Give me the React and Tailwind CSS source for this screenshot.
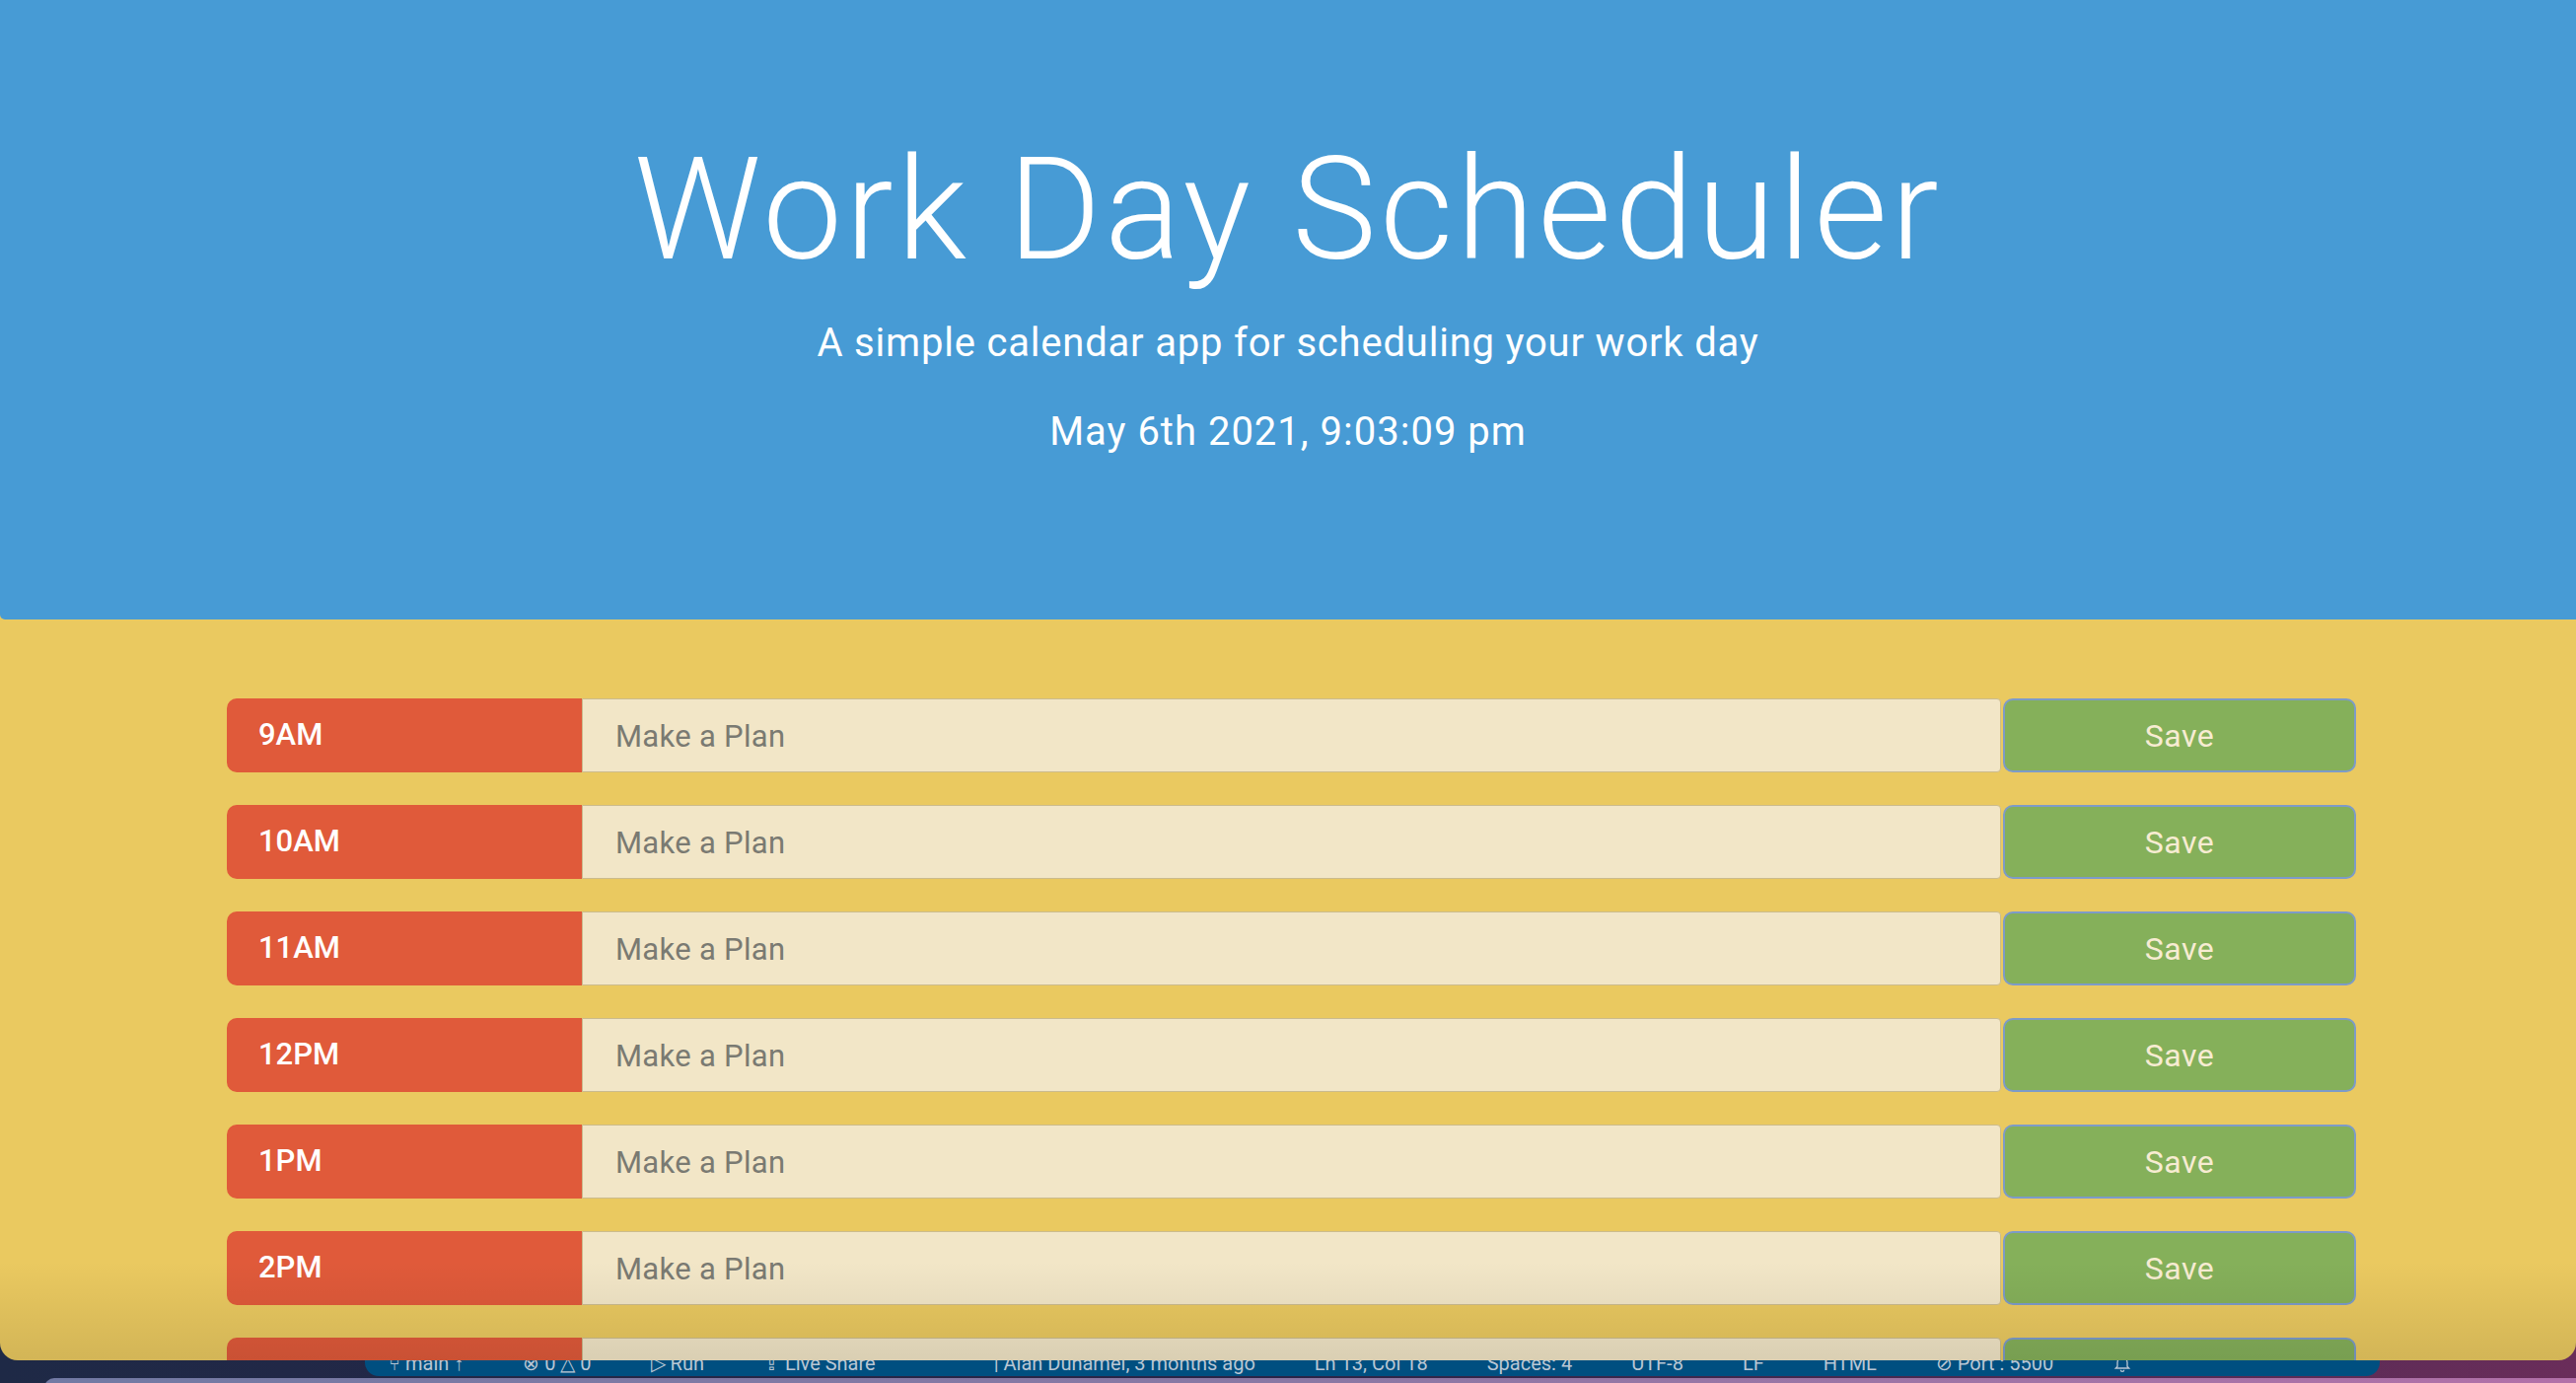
import React from "react";

const hours = ["9AM", "10AM", "11AM", "12PM", "1PM", "2PM", "3PM", "4PM", "5PM"];

function HourRow({ label }) {
  return (
    <div className="flex h-[75px] shrink-0">
      <div className="w-[360px] shrink-0 bg-[#e05a3a] rounded-l-[10px] pl-[32px] flex items-center text-white text-[31px] font-medium">
        {label}
      </div>
      <div className="flex-1 bg-[#f2e6c7] border border-[#cbbb8d] rounded-r-[4px] pl-[33px] pt-[4px] flex items-center text-[31px] tracking-[0.3px] text-[#7a7a72]">
        Make a Plan
      </div>
      <button
        type="button"
        className="w-[358px] ml-[2px] shrink-0 bg-[#85b05a] border-2 border-[#7d9bc8] rounded-[10px] text-[#f7ecd2] text-[32px] tracking-[0.5px]"
      >
        Save
      </button>
    </div>
  );
}

function Bell() {
  return (
    <svg width="20" height="20" viewBox="0 0 24 24" fill="none" stroke="currentColor" strokeWidth="1.6">
      <path d="M6 16V11a6 6 0 0 1 12 0v5l2 2H4z" />
      <path d="M10 20a2 2 0 0 0 4 0" />
    </svg>
  );
}

export default function App() {
  return (
    <div className="w-[2612px] h-[1402px] overflow-hidden bg-linear-to-r from-[#1e2946] via-[#2a2448] to-[#6a2d5a] font-['Roboto','Open_Sans',sans-serif]">
      {/* browser window */}
      <div className="relative z-10 h-[1379px] overflow-hidden rounded-b-[18px] bg-[#eac960]">
        <header className="h-[628px] bg-[#479bd5] rounded-bl-[5px] pt-[127px] text-center text-white">
          <h1 className="text-[144px] font-light leading-[1.2] tracking-[3.5px]">Work Day Scheduler</h1>
          <p className="mt-[18px] text-[40px] leading-[1.5] tracking-[0.8px]">A simple calendar app for scheduling your work day</p>
          <p className="mt-[30px] text-[40px] leading-[1.5] tracking-[1px]">May 6th 2021, 9:03:09 pm</p>
        </header>

        <div className="w-[2159px] ml-[230px] pt-[80px] flex flex-col gap-[33px]">
          {hours.map((h) => (
            <HourRow key={h} label={h} />
          ))}
        </div>

        {/* dock shadow at window bottom */}
        <div className="absolute left-0 right-0 bottom-0 h-[100px] bg-linear-to-b from-transparent to-black/10 pointer-events-none" />
      </div>

      {/* editor status bar peeking out behind */}
      <div className="relative -mt-[14px] ml-[370px] w-[2043px] h-[30px] bg-[#004f80] rounded-b-[14px] flex items-center gap-[60px] pl-[24px] pt-[4px] text-[20px] text-[#b9c6d4] whitespace-nowrap overflow-hidden">
        <span>⑂ main ↑</span>
        <span>⊗ 0 △ 0</span>
        <span>▷ Run</span>
        <span>⇪ Live Share</span>
        <span className="ml-[60px]">| Alan Duhamel, 3 months ago</span>
        <span>Ln 13, Col 18</span>
        <span>Spaces: 4</span>
        <span>UTF-8</span>
        <span>LF</span>
        <span>HTML</span>
        <span>⊘ Port : 5500</span>
        <Bell />
      </div>
      <div className="mt-[2px] ml-[45px] h-[10px] rounded-tl-[10px] bg-linear-to-r from-[#727aa4] via-[#8a78a4] to-[#b270a8]" />
    </div>
  );
}
